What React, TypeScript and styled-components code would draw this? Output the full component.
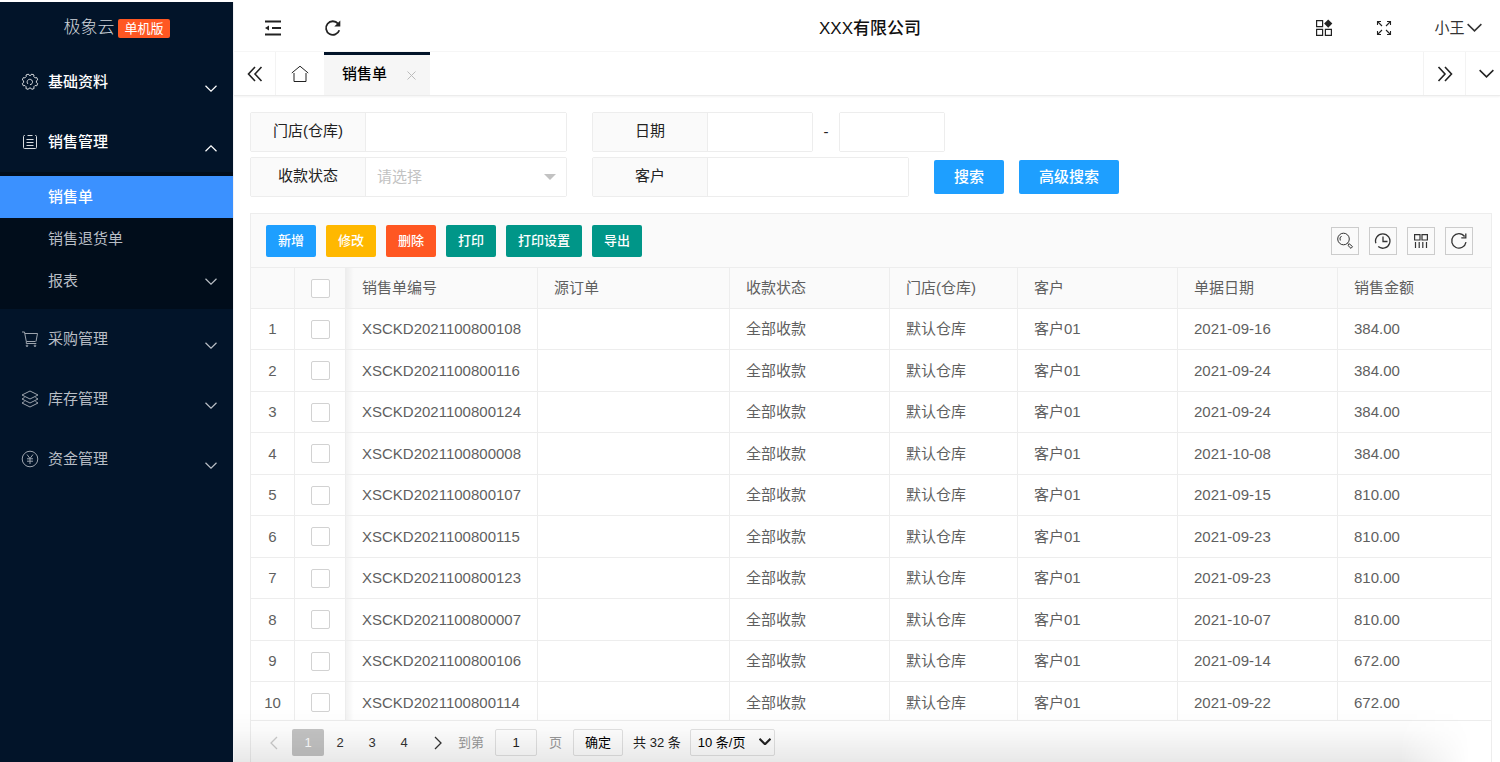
import React from "react";
import styled, { createGlobalStyle, css } from "styled-components";

const GlobalStyle = createGlobalStyle`
  *, *::before, *::after { box-sizing: border-box; }
  body {
    margin: 0;
    background: #fff;
    color: #222;
    font: 15px/20px "Liberation Sans", "Noto Sans CJK SC", sans-serif;
  }
  button, input, select { font: inherit; color: inherit; margin: 0; }
  button { cursor: pointer; }
  a { color: inherit; text-decoration: none; }
`;

const line = "#ededed";

/* ---------- shell ---------- */

const Shell = styled.div`
  display: flex;
  height: 100vh;
  padding-top: 2px;
  overflow: hidden;
`;

const Sidebar = styled.aside`
  flex: 0 0 233px;
  background: #021429;
  color: #b9bec5;
`;

const Main = styled.main`
  position: relative;
  flex: 1;
  min-width: 0;
  display: flex;
  flex-direction: column;
  border-left: 1px solid #f2f2f4;
`;

const BottomShade = styled.div`
  position: absolute;
  inset: auto 0 0 0;
  height: 54px;
  pointer-events: none;
  background: linear-gradient(to bottom, rgba(0, 0, 0, 0), rgba(0, 0, 0, 0.02) 40%, rgba(0, 0, 0, 0.09));
  mask-image: linear-gradient(to right, #000 calc(100% - 100px), transparent calc(100% - 30px));
`;

/* ---------- sidebar ---------- */

const Brand = styled.div`
  display: flex;
  align-items: center;
  justify-content: center;
  gap: 4px;
  height: 50px;
  padding-top: 2px;
  font-size: 17px;
  font-weight: 300;
  color: #d0d4da;
`;

const Edition = styled.span`
  padding: 0 6px;
  border-radius: 2px;
  background: #ff5722;
  color: #fff;
  font-size: 13px;
  line-height: 19px;
  font-weight: 400;
`;

const MenuLink = styled.a<{ $bright?: boolean }>`
  display: flex;
  align-items: center;
  gap: 9px;
  height: 60px;
  padding: 0 16px 0 21px;
  ${(p) =>
    p.$bright &&
    css`
      color: #fff;
      font-weight: 500;
    `}
  > svg {
    opacity: 0.85;
  }
`;

const Label = styled.span`
  flex: 1;
`;

const MenuArrow = styled.span`
  display: flex;
  padding-top: 12px;
`;

const SubMenu = styled.div`
  padding: 4px 0 7px;
  background: #010d1b;
`;

const SubLink = styled.a<{ $active?: boolean }>`
  display: flex;
  align-items: center;
  height: 42px;
  padding: 0 16px 0 48px;
  ${(p) =>
    p.$active &&
    css`
      background: #3b91ff;
      color: #fff;
      font-weight: 500;
    `}
`;

/* ---------- header and tabs ---------- */

const Header = styled.header`
  display: grid;
  grid-template-columns: 1fr auto 1fr;
  align-items: center;
  height: 50px;
  padding: 2px 0 0 6px;
  border-bottom: 1px solid #f6f6f6;
`;

const HeaderGroup = styled.div<{ $end?: boolean }>`
  display: flex;
  justify-content: ${(p) => (p.$end ? "flex-end" : "flex-start")};
  padding-left: 3px;
`;

const HeaderButton = styled.button`
  display: flex;
  align-items: center;
  justify-content: center;
  width: 60px;
  height: 46px;
  padding: 0;
  border: 0;
  background: none;
`;

const UserButton = styled(HeaderButton)`
  width: 86px;
  gap: 2px;
  padding-left: 2px;
  color: #333;
`;

const Company = styled.h1`
  margin: 0;
  padding-top: 2px;
  font-size: 17px;
  line-height: 24px;
  font-weight: 500;
  color: #111;
`;

const TabBar = styled.nav`
  display: flex;
  height: 44px;
  border-bottom: 1px solid #ececec;
  box-shadow: 0 1px 2px rgba(0, 0, 0, 0.05);
`;

const TabCell = styled.button<{ $width: number; $side?: "left" | "right" }>`
  display: flex;
  align-items: center;
  justify-content: center;
  width: ${(p) => p.$width}px;
  padding: 0;
  border: 0 solid #f3f3f3;
  border-right-width: ${(p) => (p.$side === "right" ? 1 : 0)}px;
  border-left-width: ${(p) => (p.$side === "left" ? 1 : 0)}px;
  background: none;
`;

const MoreCell = styled(TabCell)`
  padding-left: 6px;
`;

const ActiveTab = styled.div`
  display: flex;
  align-items: center;
  gap: 20px;
  width: 106px;
  margin-right: auto;
  padding: 0 12px 2px 18px;
  border-top: 3px solid #021429;
  background: #f6f6f6;
  color: #000;
  font-weight: 500;
`;

const CloseButton = styled.button`
  display: flex;
  padding: 2px 0 0;
  border: 0;
  background: none;
`;

/* ---------- search form ---------- */

const Content = styled.div`
  flex: 1;
  min-height: 0;
  display: flex;
  flex-direction: column;
  padding: 16px 8px 0 16px;
`;

const SearchForm = styled.form`
  display: grid;
  gap: 5px;
  margin-bottom: 16px;
`;

const FormRow = styled.div`
  display: flex;
  align-items: center;
`;

const Field = styled.div`
  display: flex;
  position: relative;
  height: 40px;
  margin-right: 25px;
  border: 1px solid ${line};
  border-radius: 2px;
`;

const FieldLabel = styled.label`
  display: flex;
  align-items: center;
  justify-content: center;
  width: 115px;
  padding-bottom: 2px;
  border-right: 1px solid ${line};
  background: #fafafa;
`;

const TextInput = styled.input<{ $width: number }>`
  width: ${(p) => p.$width}px;
  padding: 0 10px;
  border: 0;
  background: #fff;
  outline: 0;
`;

const RangeField = styled(Field)`
  margin-right: 0;
`;

const Dash = styled.span`
  width: 26px;
  text-align: center;
`;

const StatusSelect = styled.select`
  width: 200px;
  padding: 0 30px 0 11px;
  border: 0;
  background: #fff;
  color: #c2c2c2;
  appearance: none;
  outline: 0;
`;

const Caret = styled.span`
  position: absolute;
  right: 10px;
  top: 16px;
  border: 6px solid transparent;
  border-top-color: #c2c2c2;
  border-bottom-width: 0;
  pointer-events: none;
`;

const SearchButton = styled.button`
  height: 34px;
  margin-right: 15px;
  padding: 0 20px;
  border: 0;
  border-radius: 2px;
  background: #1e9fff;
  color: #fff;
  font-weight: 500;
`;

/* ---------- table card ---------- */

const Card = styled.section`
  flex: 1;
  min-height: 0;
  display: flex;
  flex-direction: column;
  border: 1px solid ${line};
  border-bottom: 0;
`;

const Toolbar = styled.div`
  display: flex;
  align-items: center;
  gap: 10px;
  height: 54px;
  flex: none;
  padding: 0 18px 0 15px;
  border-bottom: 1px solid ${line};
  background: #fafafa;
`;

const ActionButton = styled.button<{ $color: string }>`
  height: 32px;
  padding: 0 12px;
  border: 0;
  border-radius: 2px;
  background: ${(p) => p.$color};
  color: #fff;
  font-size: 13px;
  font-weight: 500;
`;

const ToolGroup = styled.div`
  display: flex;
  gap: 10px;
  margin-left: auto;
`;

const ToolButton = styled.button`
  display: flex;
  align-items: center;
  justify-content: center;
  width: 28px;
  height: 28px;
  padding: 0;
  border: 1px solid #ccc;
  background: none;
  color: #333;
`;

const TableView = styled.div`
  flex: 1;
  min-height: 0;
  overflow: hidden;
`;

const Table = styled.table`
  width: 100%;
  table-layout: fixed;
  border-collapse: separate;
  border-spacing: 0;
  color: #5f5f5f;

  th, td {
    height: 41px;
    padding: 0 16px;
    border: 0 solid ${line};
    border-width: 0 1px 1px 0;
    text-align: left;
    font-weight: 400;
    white-space: nowrap;
  }
  th { background: #fafafa; }
  tbody tr:nth-child(even) td { height: 42px; }
  th:last-child, td:last-child { border-right: 0; }
  th:nth-child(-n + 2), td:nth-child(-n + 2) { padding: 0; text-align: center; }
  th:nth-child(3), td:nth-child(3) {
    background-image: linear-gradient(to right, rgba(0, 0, 0, 0.05), rgba(0, 0, 0, 0) 8px);
  }
`;

const Col = styled.col<{ $width?: number }>`
  width: ${(p) => (p.$width ? `${p.$width}px` : "auto")};
`;

const Check = styled.input`
  display: block;
  appearance: none;
  width: 19px;
  height: 19px;
  margin: 0 auto;
  border: 1px solid #d2d2d2;
  border-radius: 2px;
  background: #fff;
`;

/* ---------- pagination ---------- */

const Pager = styled.footer`
  display: flex;
  align-items: center;
  flex: none;
  height: 42px;
  padding: 2px 5px 0;
  border-top: 1px solid ${line};
  font-size: 13px;
`;

const PageButton = styled.button<{ $current?: boolean }>`
  display: flex;
  align-items: center;
  justify-content: center;
  width: 32px;
  height: 27px;
  padding: 0;
  border: 0;
  border-radius: 2px;
  background: ${(p) => (p.$current ? "#c4c4c4" : "none")};
  color: ${(p) => (p.$current ? "#fff" : "#333")};
`;

const StepButton = styled(PageButton)`
  width: 36px;
  &:disabled { color: #ccc; }
`;

const Muted = styled.label`
  padding-left: 2px;
  color: #999;
`;

const PageInput = styled.input`
  width: 42px;
  height: 27px;
  margin: 0 10px 0 11px;
  padding: 0;
  border: 1px solid #e2e2e2;
  border-radius: 2px;
  background: none;
  text-align: center;
`;

const ConfirmButton = styled.button`
  height: 27px;
  margin: 0 10px 0 11px;
  padding: 0 11px;
  border: 1px solid #e2e2e2;
  border-radius: 2px;
  background: none;
  color: #000;
`;

const SizeBox = styled.div`
  position: relative;
  display: flex;
  margin-left: 9px;
  svg {
    position: absolute;
    right: 4px;
    top: 9px;
    pointer-events: none;
  }
`;

const SizeSelect = styled.select`
  width: 85px;
  height: 27px;
  padding: 0 20px 0 7px;
  border: 1px solid #e2e2e2;
  border-radius: 2px;
  background: none;
  color: #000;
  appearance: none;
`;

/* ---------- icons ---------- */

type IconProps = { w: number; h?: number; box: string; sw?: number; children: React.ReactNode };

const Icon = ({ w, h = w, box, sw = 1, children }: IconProps) => (
  <svg width={w} height={h} viewBox={box} fill="none" stroke="currentColor" strokeWidth={sw} aria-hidden="true">
    {children}
  </svg>
);

const Chevron = ({ w = 12, up = false, sw = 1.2 }: { w?: number; up?: boolean; sw?: number }) => (
  <Icon w={w} h={Math.round(w / 2) + 1} box="0 0 12 7" sw={sw}>
    <path d={up ? "M.5 6.2 6 .8l5.500 5.400" : "M.5 .8 6 6.200 11.500 .8"} />
  </Icon>
);

const GearIcon = () => (
  <Icon w={18} box="0 0 18 18">
    <path
      strokeLinejoin="round"
      d="M7.300 1.100 8.100 2.300h1.800l.8-1.200 2.300.9-.2 1.600 1.300 1.300 1.700-.3.9 2.300-1.300.9v1.800l1.300.9-.9 2.300-1.700-.3-1.300 1.300.3 1.700-2.300.9-.9-1.300H8.100l-.9 1.300-2.300-.9.3-1.700-1.300-1.300-1.600.3-1-2.300 1.300-.9V7.800l-1.300-.9 1-2.300 1.600.3 1.300-1.300L5 2z"
    />
    <path d="M6.900 10.900A2.700 2.700 0 1 1 9 11.700" />
  </Icon>
);

const ListIcon = () => (
  <Icon w={18} box="0 0 18 18">
    <path d="M4 2.500H3.500a1 1 0 0 0-1 1v11a1 1 0 0 0 1 1h11a1 1 0 0 0 1-1v-11a1 1 0 0 0-1-1H14M6.500 2.500h5M5.500 6.500h7M5.500 9.500h7M5.500 12.500h7" />
  </Icon>
);

const CartIcon = () => (
  <Icon w={18} box="0 0 18 18">
    <path d="M1 2h2.500l1.800 9.500h9.200M4 3.500h12.500l-1.500 8M5.300 11.500v2h10" strokeLinejoin="round" />
    <circle cx="6" cy="15.800" r=".8" />
    <circle cx="14" cy="15.800" r=".8" />
  </Icon>
);

const LayersIcon = () => (
  <Icon w={18} box="0 0 18 18">
    <path
      strokeLinejoin="round"
      d="M9 1 17 5 9 9 1 5zM3.500 7.500 1 9l8 4 8-4-2.500-1.500M3.500 11.500 1 13l8 4 8-4-2.500-1.500"
    />
  </Icon>
);

const YuanIcon = () => (
  <Icon w={18} box="0 0 18 18">
    <circle cx="9" cy="9" r="7.800" />
    <path d="M6 4.500l3 4 3-4M9 8.500v5.500M6 8.800h6M6 11.200h6" />
  </Icon>
);

const FoldIcon = () => (
  <Icon w={18} box="0 0 18 18" sw={1.8}>
    <path d="M1 2.500h16M8 9h9M1 15.500h16" />
    <path d="M1 9l4-2.500v5z" fill="currentColor" stroke="none" />
  </Icon>
);

const ReloadIcon = () => (
  <Icon w={18} box="0 0 18 18" sw={1.8}>
    <path d="M15.300 11.300A6.800 6.800 0 1 1 14 4.600" />
    <path d="M16.300 1.500v6h-6z" fill="currentColor" stroke="none" />
  </Icon>
);

const AppsIcon = () => (
  <Icon w={18} box="0 0 18 18" sw={1.2}>
    <path d="M1.600 1.600h6v6h-6zM1.600 10.400h6v6h-6zM10.400 10.400h6v6h-6z" />
    <path d="M13.200.5 17.300 4.600 13.200 8.700 9.100 4.600z" fill="currentColor" stroke="none" />
  </Icon>
);

const ExpandIcon = () => (
  <Icon w={16} box="0 0 16 16" sw={1.1}>
    <path d="M1.500 5v-3.500H5M1.500 1.500 6 6M11 1.500h3.500V5M14.500 1.500 10 6M1.500 11v3.500H5M1.500 14.500 6 10M11 14.500h3.500V11M14.500 14.500 10 10" />
  </Icon>
);

const DoubleIcon = ({ right = false }: { right?: boolean }) => (
  <Icon w={16} box="0 0 16 16" sw={1.6}>
    <path d={right ? "M1.500 1 8 8l-6.500 7M8 1l6.500 7L8 15" : "M8 1 1.500 8 8 15M14.500 1 8 8l6.500 7"} />
  </Icon>
);

const HomeIcon = () => (
  <Icon w={18} box="0 0 18 18">
    <path d="M.8 8 9 1.200 17.200 8M3 8v8.500h12V8" />
  </Icon>
);

const CloseIcon = () => (
  <Icon w={9} box="0 0 9 9">
    <path d="M.5 .5l8 8M8.500 .5l-8 8" stroke="#bbb" />
  </Icon>
);

const SearchIcon = () => (
  <Icon w={18} box="0 0 18 18">
    <circle cx="7.500" cy="7" r="5.800" />
    <path d="M4.300 8.500A3.600 3.600 0 0 1 5.500 4M11.500 11.300l1.500 1.400" />
    <path d="M13.300 11.800l3.200 2.800-1.500 1.800-3-2.900z" />
  </Icon>
);

const ClockIcon = () => (
  <Icon w={18} box="0 0 18 18" sw={1.3}>
    <path d="M1.900 11.300A7.200 7.200 0 1 1 4.200 14.600M9 4.500V9.500h4.500" />
  </Icon>
);

const ColumnsIcon = () => (
  <Icon w={16} box="0 0 16 16" sw={1.2}>
    <path d="M1.600 1.600h5.400v5.400H1.600zM9 1.600h5.400v5.400H9zM2.500 9v6M6.200 9v6M9.800 9v6M13.500 9v6" />
  </Icon>
);

const RefreshIcon = () => (
  <Icon w={18} box="0 0 18 18" sw={1.3}>
    <path d="M16 10.200A7.200 7.200 0 1 1 14.600 4.500M15.800 1.500v4.300h-4.500" />
  </Icon>
);

const SideArrow = ({ right = false }: { right?: boolean }) => (
  <Icon w={8} h={14} box="0 0 8 14" sw={1.3}>
    <path d={right ? "M1 1l6 6-6 6" : "M7 1 1 7l6 6"} />
  </Icon>
);

/* ---------- data ---------- */

const actions = [
  ["新增", "#1e9fff"],
  ["修改", "#ffb800"],
  ["删除", "#ff5722"],
  ["打印", "#009688"],
  ["打印设置", "#009688"],
  ["导出", "#009688"],
];

const columns = ["销售单编号", "源订单", "收款状态", "门店(仓库)", "客户", "单据日期", "销售金额"];
const widths = [44, 51, 192, 192, 160, 128, 160, 160];

const orders = [
  ["XSCKD2021100800108", "2021-09-16", "384.00"],
  ["XSCKD2021100800116", "2021-09-24", "384.00"],
  ["XSCKD2021100800124", "2021-09-24", "384.00"],
  ["XSCKD2021100800008", "2021-10-08", "384.00"],
  ["XSCKD2021100800107", "2021-09-15", "810.00"],
  ["XSCKD2021100800115", "2021-09-23", "810.00"],
  ["XSCKD2021100800123", "2021-09-23", "810.00"],
  ["XSCKD2021100800007", "2021-10-07", "810.00"],
  ["XSCKD2021100800106", "2021-09-14", "672.00"],
  ["XSCKD2021100800114", "2021-09-22", "672.00"],
];

/* ---------- page ---------- */

type MenuItemProps = { icon: React.ReactNode; text: string; bright?: boolean; open?: boolean };

const MenuItem = ({ icon, text, bright, open }: MenuItemProps) => (
  <MenuLink href="#" $bright={bright}>
    {icon}
    <Label>{text}</Label>
    <MenuArrow>
      <Chevron up={open} />
    </MenuArrow>
  </MenuLink>
);

export default function App() {
  return (
    <>
      <GlobalStyle />
      <Shell>
        <Sidebar>
          <Brand>
            极象云<Edition>单机版</Edition>
          </Brand>
          <nav>
            <MenuItem icon={<GearIcon />} text="基础资料" bright />
            <MenuItem icon={<ListIcon />} text="销售管理" bright open />
            <SubMenu>
              <SubLink href="#" $active>
                <Label>销售单</Label>
              </SubLink>
              <SubLink href="#">
                <Label>销售退货单</Label>
              </SubLink>
              <SubLink href="#">
                <Label>报表</Label>
                <Chevron />
              </SubLink>
            </SubMenu>
            <MenuItem icon={<CartIcon />} text="采购管理" />
            <MenuItem icon={<LayersIcon />} text="库存管理" />
            <MenuItem icon={<YuanIcon />} text="资金管理" />
          </nav>
        </Sidebar>

        <Main>
          <Header>
            <HeaderGroup>
              <HeaderButton aria-label="收起菜单"><FoldIcon /></HeaderButton>
              <HeaderButton aria-label="刷新页面"><ReloadIcon /></HeaderButton>
            </HeaderGroup>
            <Company>XXX有限公司</Company>
            <HeaderGroup $end>
              <HeaderButton aria-label="应用"><AppsIcon /></HeaderButton>
              <HeaderButton aria-label="全屏"><ExpandIcon /></HeaderButton>
              <UserButton>
                小王
                <Chevron w={15} />
              </UserButton>
            </HeaderGroup>
          </Header>

          <TabBar>
            <TabCell $width={42} $side="right" aria-label="向左"><DoubleIcon /></TabCell>
            <TabCell $width={48} aria-label="首页"><HomeIcon /></TabCell>
            <ActiveTab>
              销售单
              <CloseButton aria-label="关闭"><CloseIcon /></CloseButton>
            </ActiveTab>
            <TabCell $width={42} $side="left" aria-label="向右"><DoubleIcon right /></TabCell>
            <MoreCell $width={35} $side="left" aria-label="更多"><Chevron w={15} /></MoreCell>
          </TabBar>

          <Content>
            <SearchForm onSubmit={(e) => e.preventDefault()}>
              <FormRow>
                <Field>
                  <FieldLabel htmlFor="store">门店(仓库)</FieldLabel>
                  <TextInput id="store" $width={200} />
                </Field>
                <RangeField>
                  <FieldLabel htmlFor="from">日期</FieldLabel>
                  <TextInput id="from" $width={104} />
                </RangeField>
                <Dash>-</Dash>
                <RangeField>
                  <TextInput aria-label="结束日期" $width={104} />
                </RangeField>
              </FormRow>
              <FormRow>
                <Field>
                  <FieldLabel htmlFor="status">收款状态</FieldLabel>
                  <StatusSelect id="status">
                    <option>请选择</option>
                  </StatusSelect>
                  <Caret />
                </Field>
                <Field>
                  <FieldLabel htmlFor="customer">客户</FieldLabel>
                  <TextInput id="customer" $width={200} />
                </Field>
                <SearchButton type="submit">搜索</SearchButton>
                <SearchButton type="button">高级搜索</SearchButton>
              </FormRow>
            </SearchForm>

            <Card>
              <Toolbar>
                {actions.map(([text, color]) => (
                  <ActionButton key={text} $color={color}>{text}</ActionButton>
                ))}
                <ToolGroup>
                  <ToolButton aria-label="查询"><SearchIcon /></ToolButton>
                  <ToolButton aria-label="历史"><ClockIcon /></ToolButton>
                  <ToolButton aria-label="列设置"><ColumnsIcon /></ToolButton>
                  <ToolButton aria-label="刷新"><RefreshIcon /></ToolButton>
                </ToolGroup>
              </Toolbar>
              <TableView>
                <Table>
                  <colgroup>
                    {widths.map((w, i) => (
                      <Col key={i} $width={w} />
                    ))}
                    <Col />
                  </colgroup>
                  <thead>
                    <tr>
                      <th />
                      <th><Check type="checkbox" aria-label="全选" /></th>
                      {columns.map((c) => (
                        <th key={c}>{c}</th>
                      ))}
                    </tr>
                  </thead>
                  <tbody>
                    {orders.map(([code, date, amount], i) => (
                      <tr key={code}>
                        <td>{i + 1}</td>
                        <td><Check type="checkbox" aria-label={code} /></td>
                        <td>{code}</td>
                        <td />
                        <td>全部收款</td>
                        <td>默认仓库</td>
                        <td>客户01</td>
                        <td>{date}</td>
                        <td>{amount}</td>
                      </tr>
                    ))}
                  </tbody>
                </Table>
              </TableView>
              <Pager>
                <StepButton aria-label="上一页" disabled><SideArrow /></StepButton>
                <PageButton $current>1</PageButton>
                <PageButton>2</PageButton>
                <PageButton>3</PageButton>
                <PageButton>4</PageButton>
                <StepButton aria-label="下一页"><SideArrow right /></StepButton>
                <Muted htmlFor="page">到第</Muted>
                <PageInput id="page" defaultValue="1" />
                <Muted htmlFor="page">页</Muted>
                <ConfirmButton>确定</ConfirmButton>
                <span>共 32 条</span>
                <SizeBox>
                  <SizeSelect aria-label="每页条数">
                    <option>10 条/页</option>
                  </SizeSelect>
                  <Chevron w={12} sw={2.2} />
                </SizeBox>
              </Pager>
            </Card>
          </Content>
          <BottomShade />
        </Main>
      </Shell>
    </>
  );
}
